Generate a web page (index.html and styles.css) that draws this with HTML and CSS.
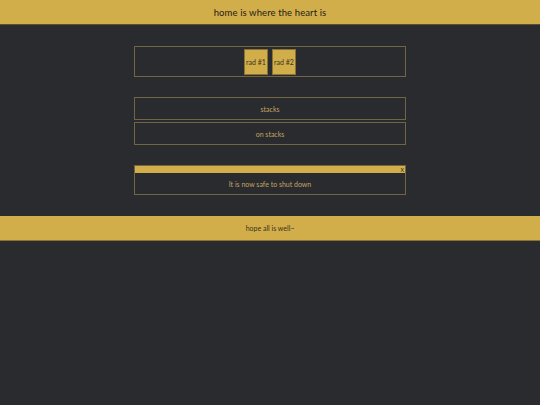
FILE: index.html
```html
<!DOCTYPE html>
<html>
<head>
<meta charset="utf-8">
<link rel="stylesheet" href="styles.css">
</head>
<body>
<header class="topbar">home is where the heart is</header>
<main class="content">
  <section class="panel radios">
    <button class="rad">rad #1</button>
    <button class="rad">rad #2</button>
  </section>
  <section class="stack">
    <div class="panel row">stacks</div>
    <div class="panel row">on stacks</div>
  </section>
  <section class="panel alert">
    <div class="alert-bar"><span class="close">x</span></div>
    <div class="alert-body">It is now safe to shut down</div>
  </section>
</main>
<footer class="bottombar">hope all is well~</footer>
</body>
</html>
```
FILE: styles.css
```css
html, body {
  margin: 0;
  padding: 0;
  background: #2a2b2f;
  font-family: Lato, "DejaVu Sans", sans-serif;
}
.topbar {
  height: 24px;
  border-bottom: 1px solid #5c5030;
  background: #d2ae4b;
  color: #1f1c15;
  font-size: 9.5px;
  font-weight: normal;
  letter-spacing: 0.1px;
  display: flex;
  align-items: center;
  justify-content: center;
}
.content {
  width: 272px;
  margin: 0 auto;
  padding: 21px 0;
  display: flex;
  flex-direction: column;
  gap: 20px;
}
.panel {
  border: 1px solid #726545;
  box-sizing: border-box;
}
.radios {
  height: 31px;
  display: flex;
  justify-content: center;
  align-items: center;
  gap: 4px;
}
.rad {
  width: 24px;
  height: 26px;
  padding: 0;
  margin: 0;
  background: #d2ae4b;
  border: 1px solid #8a7235;
  color: #3a3320;
  font-family: inherit;
  font-size: 7px;
}
.stack {
  display: flex;
  flex-direction: column;
  gap: 2px;
}
.row {
  height: 23px;
  display: flex;
  align-items: center;
  justify-content: center;
  color: #c2a461;
  font-size: 7px;
}
.alert {
  height: 30px;
  display: flex;
  flex-direction: column;
}
.alert-bar {
  height: 7px;
  background: #d2ae4b;
  display: flex;
  justify-content: flex-end;
  align-items: center;
}
.close {
  font-size: 7px;
  line-height: 7px;
  color: #3a3320;
  padding-right: 1px;
}
.alert-body {
  flex: 1;
  display: flex;
  align-items: center;
  justify-content: center;
  color: #c2a461;
  font-size: 7px;
}
.bottombar {
  height: 24px;
  border-bottom: 1px solid #8a7235;
  background: #d2ae4b;
  color: #3a3320;
  font-size: 7px;
  display: flex;
  align-items: center;
  justify-content: center;
}
```
